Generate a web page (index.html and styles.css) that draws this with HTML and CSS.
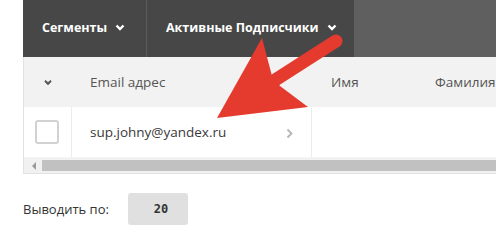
FILE: index.html
```html
<!DOCTYPE html>
<html lang="ru">
<head>
<meta charset="utf-8">
<link rel="stylesheet" href="styles.css">
</head>
<body>
<div class="page">
  <div class="nav">
    <div class="nav-dark">
      <div class="tab tab-seg">Сегменты <svg class="chev" width="10" height="7" viewBox="0 0 10 7"><path d="M1.5 1.5 L5 5 L8.5 1.5" fill="none" stroke="#fff" stroke-width="2.4"/></svg></div>
      <div class="tab tab-act">Активные Подписчики <svg class="chev" width="10" height="7" viewBox="0 0 10 7"><path d="M1.5 1.5 L5 5 L8.5 1.5" fill="none" stroke="#fff" stroke-width="2.4"/></svg></div>
    </div>
  </div>
  <div class="table">
    <div class="thead">
      <div class="c c-sel"><svg width="10" height="7" viewBox="0 0 10 7"><path d="M2 1.8 L5 4.8 L8 1.8" fill="none" stroke="#555" stroke-width="2"/></svg></div>
      <div class="c c-email">Email адрес</div>
      <div class="c c-name">Имя</div>
      <div class="c c-last">Фамилия</div>
    </div>
    <div class="trow">
      <div class="c c-sel b"><span class="checkbox"></span></div>
      <div class="c c-email b"><span class="email">sup.johny@yandex.ru</span><svg class="more" width="7" height="11" viewBox="0 0 7 11"><path d="M1.5 1.5 L5.5 5.5 L1.5 9.5" fill="none" stroke="#b5b5b5" stroke-width="1.8"/></svg></div>
      <div class="c c-name"></div>
      <div class="c c-last"></div>
    </div>
    <div class="scroll">
      <svg class="sarrow" width="6" height="8" viewBox="0 0 6 8"><path d="M5 0 L5 8 L1 4 Z" fill="#9a9a9a"/></svg>
      <div class="thumb"></div>
    </div>
  </div>
  <div class="pager">
    <span class="pager-label">Выводить по:</span>
    <div class="select"><span class="num">20</span></div>
  </div>
</div>
<svg class="arrow" width="496" height="249" viewBox="0 0 496 249">
  <line x1="272" y1="82" x2="336" y2="41" stroke="#e53b2f" stroke-width="13" stroke-linecap="round"/>
  <polygon points="217,118 262,38 272,76 280,86 308,107" fill="#e53b2f"/>
</svg>
</body>
</html>
```
FILE: styles.css
```css
html, body {
  margin: 0;
  padding: 0;
  background: #fff;
}
body {
  font-family: "Open Sans", "Liberation Sans", sans-serif;
  font-size: 13px;
  color: #333;
  width: 496px;
  height: 249px;
  overflow: hidden;
  position: relative;
}
.page {
  padding-left: 23px;
  overflow: hidden;
}
.nav {
  display: flex;
  height: 57px;
  background: #5f5f5f;
}
.nav-dark {
  display: flex;
  width: 331px;
  flex: none;
  background: #474747;
}
.tab {
  display: flex;
  align-items: center;
  color: #fff;
  font-weight: 700;
  font-size: 12.5px;
  padding-bottom: 3px;
  box-sizing: border-box;
  white-space: nowrap;
}
.chev {
  margin-left: 8px;
  margin-top: 1px;
}
.tab-seg {
  width: 124px;
  padding-left: 19px;
  border-right: 1px solid #5c5c5c;
}
.tab-act {
  padding-left: 19px;
}
.table {
  width: 520px;
  border-left: 1px solid #e2e2e2;
  border-bottom: 1px solid #e2e2e2;
}
.thead, .trow {
  display: flex;
  height: 50px;
}
.thead {
  background: #f2f2f2;
  color: #555;
  font-size: 13.5px;
}
.c {
  display: flex;
  align-items: center;
  box-sizing: border-box;
  flex: none;
}
.c-sel {
  width: 47px;
  justify-content: center;
}
.c-email {
  width: 240px;
  padding-left: 19px;
  padding-right: 18px;
}
.c-name {
  width: 104px;
  padding-left: 20px;
}
.c-last {
  padding-left: 20px;
  flex: 1;
}
.trow .b {
  border-right: 1px solid #ececec;
}
.trow .c-sel {
  width: 48px;
  padding-right: 1px;
}
.trow .c-email {
  width: 240px;
  padding-left: 18px;
}
.checkbox {
  width: 20px;
  height: 20px;
  border: 2px solid #d2d2d2;
  border-radius: 3px;
  background: #fff;
}
.email {
  color: #3a3a3a;
  font-size: 13.5px;
  flex: 1;
}
.more {
  margin-top: 2px;
}
.scroll {
  display: flex;
  align-items: center;
  height: 16px;
  background: #f1f1f1;
  border-top: 1px solid #f4f4f4;
  box-sizing: border-box;
}
.sarrow {
  margin-left: 7px;
  margin-right: 5px;
}
.thumb {
  flex: 1;
  height: 11px;
  background: #c1c1c1;
}
.pager {
  display: flex;
  align-items: center;
  margin-top: 19px;
}
.pager-label {
  color: #333;
  width: 105px;
}
.select {
  display: flex;
  align-items: center;
  justify-content: center;
  width: 60px;
  height: 32px;
  background: #e0e0e0;
  border-radius: 3px;
  padding-left: 6px;
  box-sizing: border-box;
}
.num {
  font-family: "DejaVu Sans Mono", monospace;
  font-size: 12px;
  font-weight: 700;
  color: #333;
}
.arrow {
  position: absolute;
  left: 0;
  top: 0;
  pointer-events: none;
}
```
